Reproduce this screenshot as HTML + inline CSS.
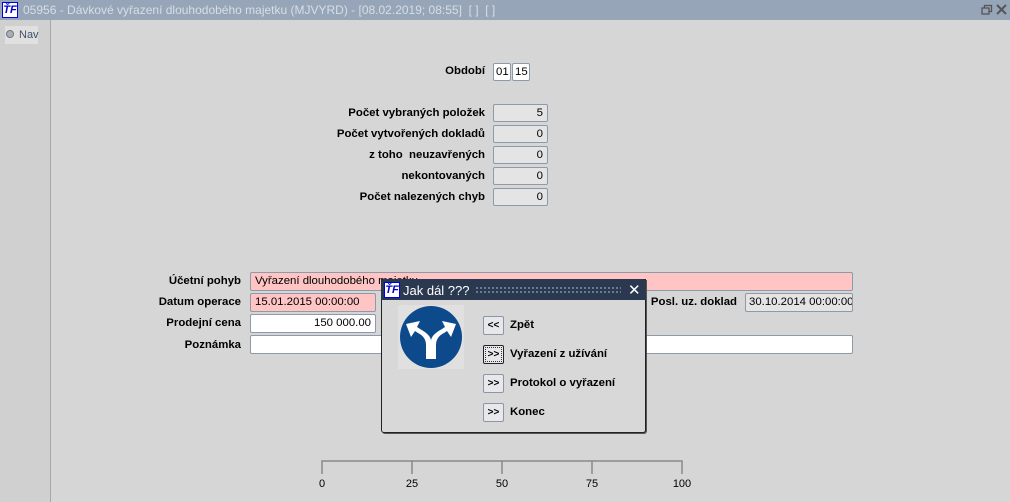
<!DOCTYPE html>
<html><head><meta charset="utf-8"><style>
body{margin:0;width:1010px;height:502px;background:#d6d6d6;font-family:"Liberation Sans",Arial,sans-serif;font-size:11.4px;position:relative;overflow:hidden}
.a{position:absolute;white-space:nowrap}
.lbl{position:absolute;font-weight:bold;text-align:right;color:#000;font-size:11.4px;white-space:nowrap}
.box{position:absolute;border:1px solid #8e9aa8;border-radius:2px;background:#e4e4e4;box-sizing:border-box;font-size:11.4px;line-height:16px;padding:0 4px;white-space:nowrap;overflow:hidden}
.btn{position:absolute;left:483px;width:21px;height:19px;box-sizing:border-box;border:1px solid #8c96a4;border-radius:2px;background:#e8e8ec;font-size:10px;font-weight:bold;text-align:center;line-height:17px}
.bt{position:absolute;left:510px;font-weight:bold;font-size:11.4px;white-space:nowrap}
</style></head><body>
<div class="a" style="left:0;top:0;width:1010px;height:20px;background:#97a5b8"></div>
<div class="a" style="left:2px;top:2px;width:16px;height:16px;background:#fff;border:1px solid #0000e0;box-sizing:border-box;font:italic bold 11px 'Liberation Sans';color:#0000c0;line-height:14px;text-align:center">ŤF</div>
<div class="a" style="left:23px;top:3px;color:#d8dee6;font-size:12px">05956 - Dávkové vyřazení dlouhodobého majetku (MJVYRD) - [08.02.2019; 08:55]&nbsp; [ ]&nbsp; [ ]</div>
<svg class="a" style="left:981px;top:4px" width="28" height="12"><rect x="1" y="4" width="7" height="6" fill="none" stroke="#555" stroke-width="1.3"/><path d="M3.5 4V1.5h7v6H8" fill="none" stroke="#555" stroke-width="1.3"/><path d="M16 1l9 9M25 1l-9 9" stroke="#555" stroke-width="2"/></svg>
<div class="a" style="left:0;top:20px;width:51px;height:482px;background:#d0d0d0;border-right:1px solid #a8a8a8;box-sizing:border-box"></div>
<div class="a" style="left:5px;top:26px;width:33px;height:18px;background:#e0e0e0"></div>
<div class="a" style="left:6px;top:30px;width:8px;height:8px;border-radius:50%;border:1px solid #777;background:#a8b0bc;box-sizing:border-box"></div>
<div class="a" style="left:19px;top:29px;color:#405060;font-size:11px">Nav</div>

<div class="lbl" style="left:300px;width:185px;top:65px">Období</div>
<div class="box" style="left:493px;top:63px;width:18px;height:18px;background:#fff;padding:0 2px;line-height:16px">01</div>
<div class="box" style="left:512px;top:63px;width:18px;height:18px;background:#fff;padding:0 2px;line-height:16px">15</div>
<div class="lbl" style="left:250px;width:235px;top:107px">Počet vybraných položek</div>
<div class="lbl" style="left:250px;width:235px;top:128px">Počet vytvořených dokladů</div>
<div class="lbl" style="left:250px;width:235px;top:149px">z toho&nbsp; neuzavřených</div>
<div class="lbl" style="left:250px;width:235px;top:170px">nekontovaných</div>
<div class="lbl" style="left:250px;width:235px;top:191px">Počet nalezených chyb</div>
<div class="box" style="left:493px;top:104px;width:55px;height:18px;text-align:right">5</div>
<div class="box" style="left:493px;top:125px;width:55px;height:18px;text-align:right">0</div>
<div class="box" style="left:493px;top:146px;width:55px;height:18px;text-align:right">0</div>
<div class="box" style="left:493px;top:167px;width:55px;height:18px;text-align:right">0</div>
<div class="box" style="left:493px;top:188px;width:55px;height:18px;text-align:right">0</div>

<div class="lbl" style="left:100px;width:141px;top:275px">Účetní pohyb</div>
<div class="lbl" style="left:100px;width:141px;top:296px">Datum operace</div>
<div class="lbl" style="left:100px;width:141px;top:317px">Prodejní cena</div>
<div class="lbl" style="left:100px;width:141px;top:339px">Poznámka</div>
<div class="box" style="left:250px;top:272px;width:603px;height:19px;background:#ffc4c4;line-height:17px">Vyřazení dlouhodobého majetku</div>
<div class="box" style="left:250px;top:293px;width:126px;height:19px;background:#ffc4c4;line-height:17px">15.01.2015 00:00:00</div>
<div class="box" style="left:250px;top:314px;width:126px;height:19px;background:#fff;text-align:right;line-height:17px">150 000.00</div>
<div class="box" style="left:250px;top:335px;width:603px;height:19px;background:#fff"></div>
<div class="lbl" style="left:600px;width:137px;top:296px">Posl. uz. doklad</div>
<div class="box" style="left:745px;top:293px;width:108px;height:19px;line-height:17px;padding:0 3px">30.10.2014 00:00:00</div>

<div class="a" style="left:381px;top:279px;width:265px;height:154px;background:#d8d8d8;border:1px solid #222;box-sizing:border-box;border-radius:0 0 3px 3px;box-shadow:1px 1px 0 #555"></div>
<div class="a" style="left:381px;top:279px;width:265px;height:21px;background:#2a3850;border-radius:3px 3px 0 0"></div>
<div class="a" style="left:384px;top:282px;width:16px;height:16px;background:#fff;border:1px solid #0000e0;box-sizing:border-box;font:italic bold 11px 'Liberation Sans';color:#0000c0;line-height:14px;text-align:center">ŤF</div>
<div class="a" style="left:403px;top:283px;color:#fff;font-size:13px">Jak dál ???</div>
<div class="a" style="left:475px;top:286px;width:146px;height:8px;background-image:radial-gradient(#8090a8 0.8px,transparent 1px);background-size:4px 4px"></div>
<div class="a" style="left:628px;top:281px;color:#fff;font-size:15px">✕</div>
<svg class="a" style="left:398px;top:305px" width="66" height="64"><rect width="66" height="64" fill="#e0e0e0"/><circle cx="33" cy="32" r="31" fill="#0c4a8c"/><path d="M28 54V40Q28 32 20 28L17 26L13 32L8 19L22 16L19 22L22 24Q33 30 33 36Q33 30 44 24L47 22L44 16L58 19L53 32L49 26L46 28Q38 32 38 40V54Z" fill="#fff"/></svg>
<div class="btn" style="top:316px">&lt;&lt;</div>
<div class="btn" style="top:345px;border:1px solid #222;outline:1px dotted #333;outline-offset:-3px">&gt;&gt;</div>
<div class="btn" style="top:374px">&gt;&gt;</div>
<div class="btn" style="top:403px">&gt;&gt;</div>
<div class="bt" style="top:319px">Zpět</div>
<div class="bt" style="top:348px">Vyřazení z užívání</div>
<div class="bt" style="top:377px">Protokol o vyřazení</div>
<div class="bt" style="top:406px">Konec</div>

<svg class="a" style="left:300px;top:455px" width="420" height="40"><path d="M22 19V6H382V19M112 6V19M202 6V19M292 6V19" fill="none" stroke="#888" stroke-width="1.5"/>
<g font-family="Liberation Sans" font-size="11" text-anchor="middle" fill="#000"><text x="22" y="32">0</text><text x="112" y="32">25</text><text x="202" y="32">50</text><text x="292" y="32">75</text><text x="382" y="32">100</text></g></svg>
</body></html>
